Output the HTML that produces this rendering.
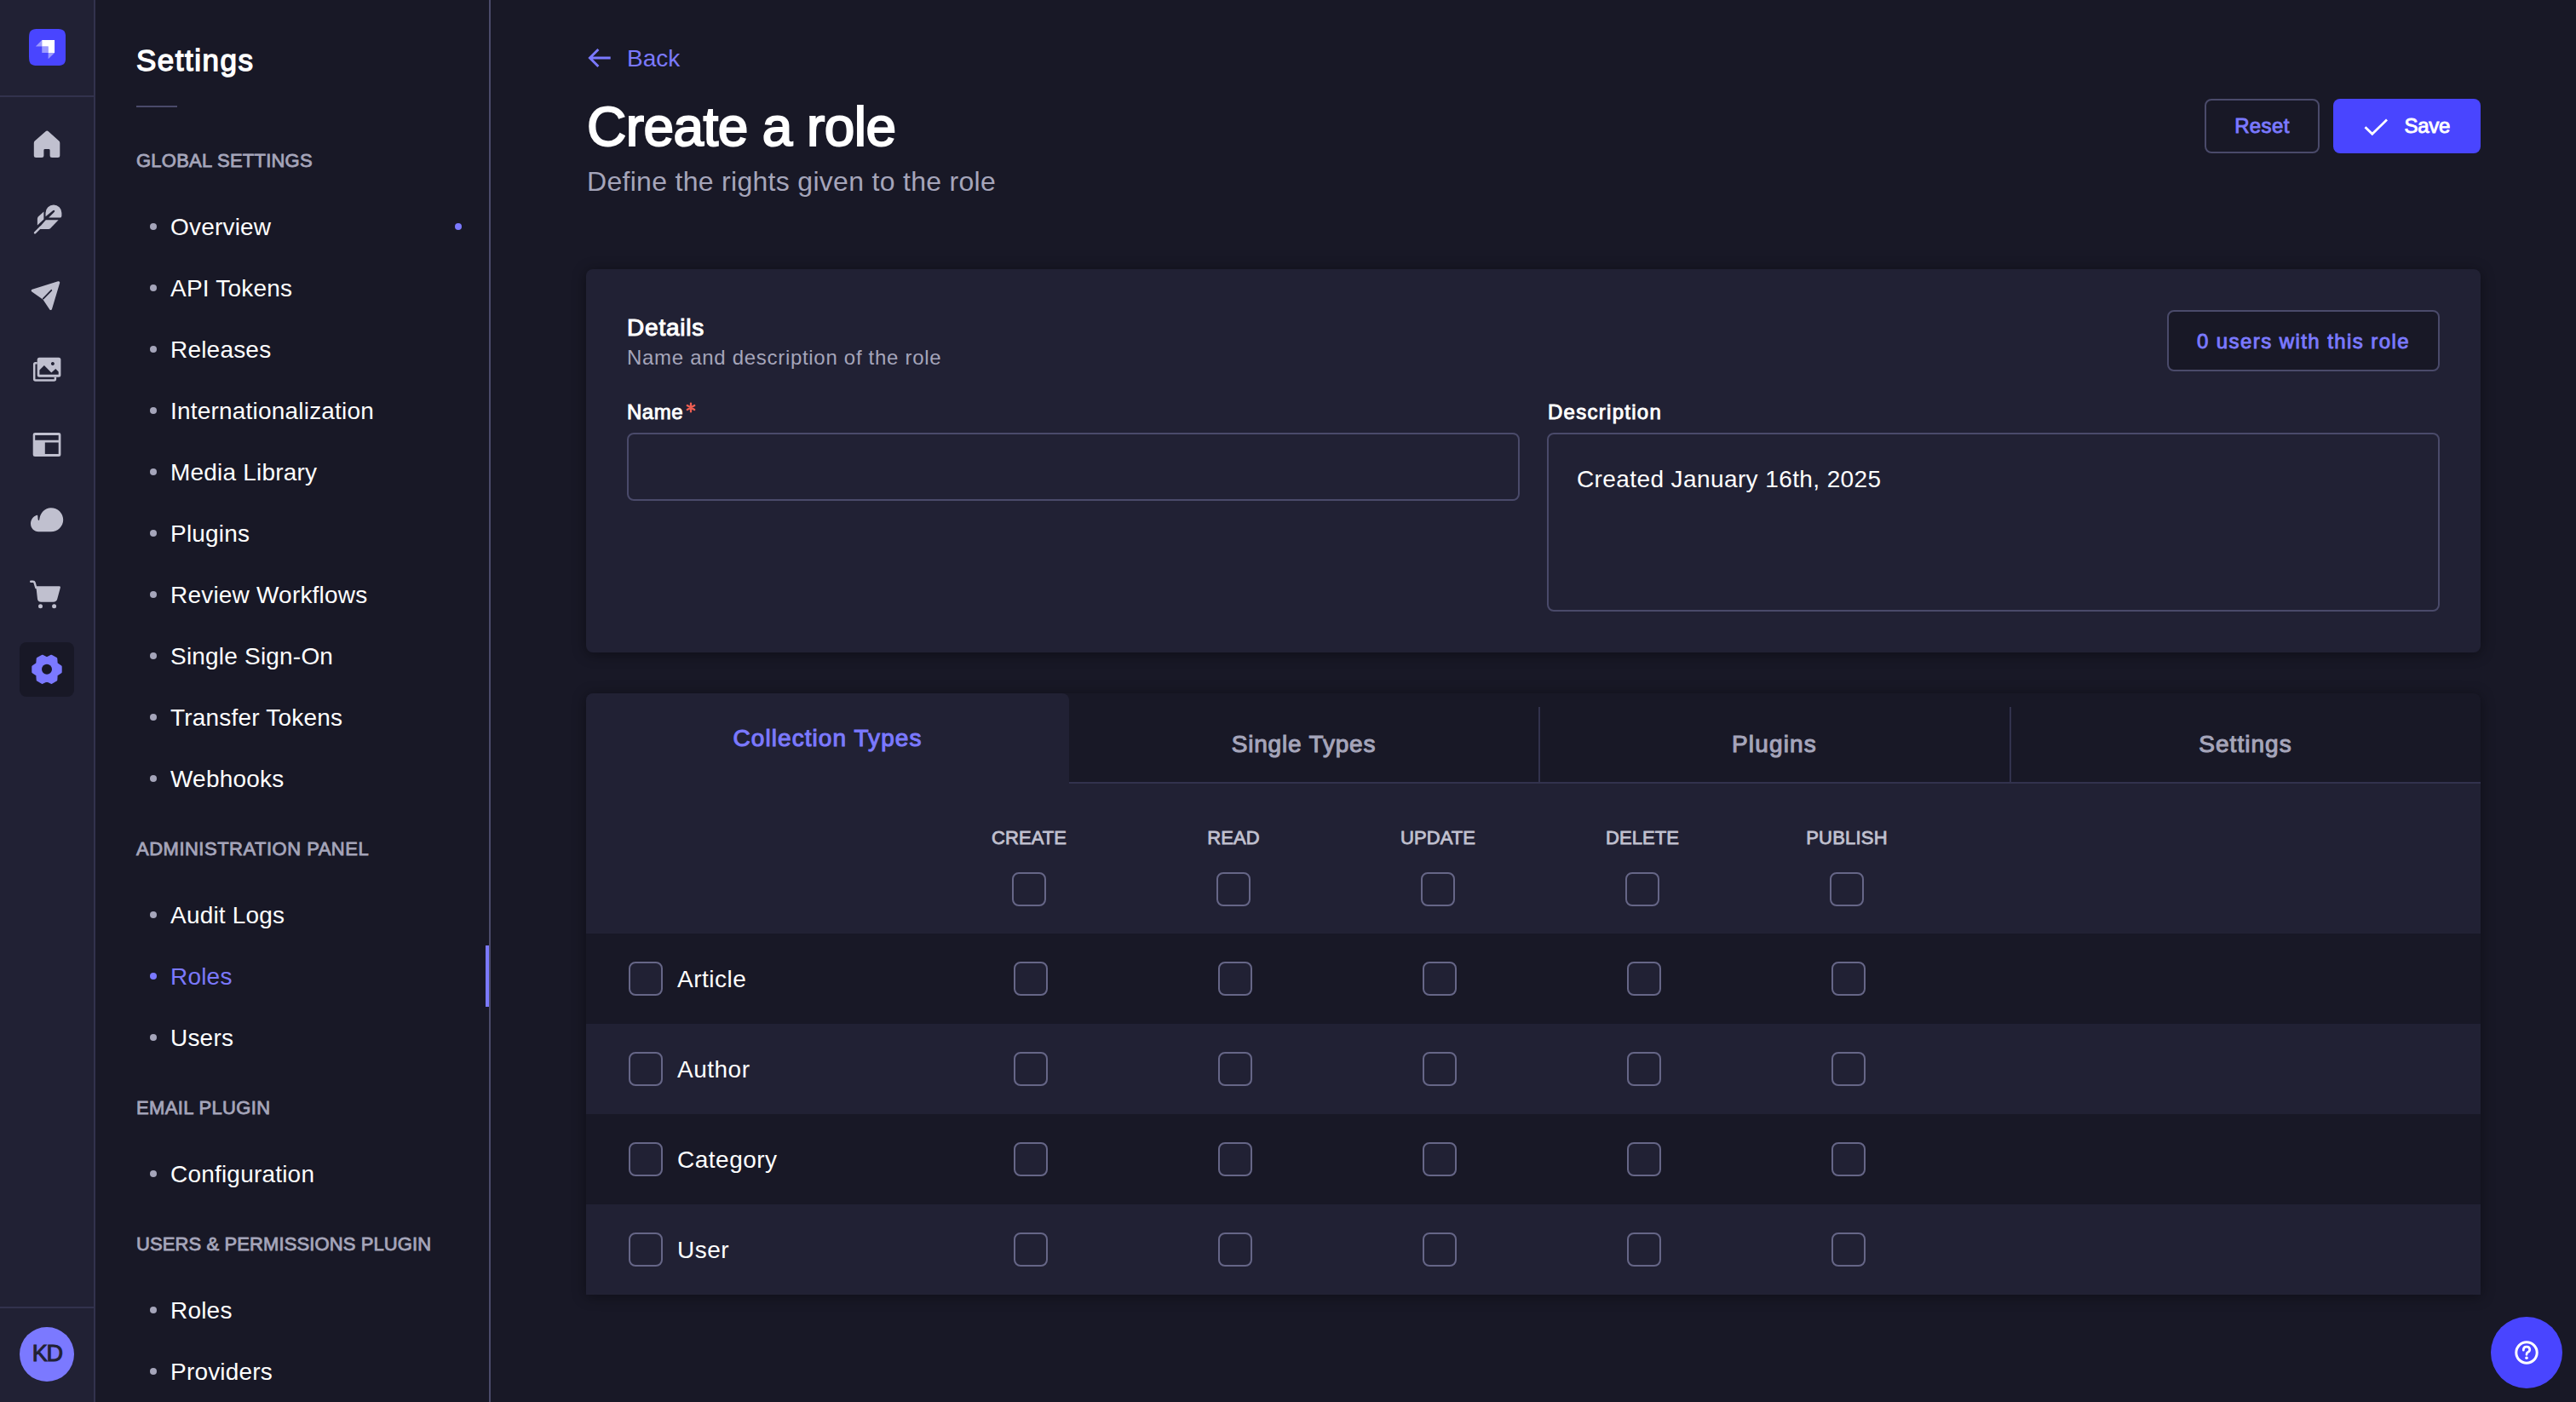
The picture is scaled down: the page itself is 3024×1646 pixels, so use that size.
<!DOCTYPE html><html><head><meta charset="utf-8"><style>
html,body{margin:0;padding:0;}
body{width:3024px;height:1646px;overflow:hidden;background:#181826;position:relative;font-family:"Liberation Sans",sans-serif;}
.t{position:absolute;white-space:nowrap;}
.r{position:absolute;box-sizing:border-box;}
svg{position:absolute;}
</style></head><body>
<div class="r" style="left:0px;top:0px;width:110px;height:1646px;background:#212134;"></div>
<div class="r" style="left:110px;top:0px;width:2px;height:1646px;background:#32324d;"></div>
<div class="r" style="left:0px;top:112px;width:110px;height:2px;background:#32324d;"></div>
<div class="r" style="left:0px;top:1534px;width:110px;height:2px;background:#32324d;"></div>
<div class="r" style="left:23px;top:754px;width:64px;height:64px;background:#181826;border-radius:8px;"></div>
<svg style="left:34.3px;top:33.8px" width="43.2" height="43.2" viewBox="0 0 600 600">
<path fill="#4945FF" d="M0 208C0 109.948 0 60.9218 30.4609 30.4609C60.9218 0 109.948 0 208 0H392C490.052 0 539.078 0 569.539 30.4609C600 60.9218 600 109.948 600 208V392C600 490.052 600 539.078 569.539 569.539C539.078 600 490.052 600 392 600H208C109.948 600 60.9218 600 30.4609 569.539C0 539.078 0 490.052 0 392V208Z"/>
<path fill="#fff" fill-rule="evenodd" d="M414 182H212V285H315V388H418V186C418 183.791 416.209 182 414 182Z"/>
<rect width="4" height="4" x="311" y="384" fill="#fff"/>
<path fill="#fff" d="M212 285H311C313.209 285 315 286.791 315 289V388H216C213.791 388 212 386.209 212 384V285Z" opacity=".45"/>
<path fill="#fff" d="M315 388H418L318.414 487.586C317.154 488.846 315 487.953 315 486.172V388Z" opacity=".45"/>
<path fill="#fff" d="M212 285V182L112.414 281.586C111.154 282.846 112.046 285 113.828 285H212Z" opacity=".45"/>
</svg>
<svg style="left:0;top:0" width="110" height="840" viewBox="0 0 110 840">
<!-- home -->
<path fill="#c0c0cf" d="M53.6 154.2 Q55.2 152.8 56.8 154.2 L69.3 165.5 Q70.3 166.4 70.3 167.9 L70.3 182.5 Q70.3 185 67.8 185 L61.1 185 Q58.6 185 58.6 182.5 L58.6 176.5 Q58.6 175.1 57.2 175.1 L52.8 175.1 Q51.4 175.1 51.4 176.5 L51.4 182.5 Q51.4 185 48.9 185 L42.3 185 Q39.8 185 39.8 182.5 L39.8 167.9 Q39.8 166.4 40.8 165.5 Z"/>
<!-- feather -->
<path fill="#c0c0cf" d="M53.5 254.2 L53.5 250 A9.45 9.45 0 0 1 72.4 250 L72.4 253.5 Q72.4 255.5 70.4 255.5 L57.2 255.5 L63.9 248.8 Q64.7 247.9 63.9 247.1 Q63 246.3 62.1 247.2 Z"/>
<path fill="#c0c0cf" d="M43.9 256.8 Q43.9 255.3 45 254.3 L51.4 248.5 L51.4 257.4 L43.9 264.4 Z"/>
<path fill="#c0c0cf" d="M53.8 258.2 L68.6 258.2 L59 268.2 Q58.2 269 57 269 L47.3 269 L45.9 267.3 Z"/>
<path fill="none" stroke="#c0c0cf" stroke-width="2.4" stroke-linecap="round" d="M41 273.3 L47.5 266.8"/>
<!-- paper plane -->
<path fill="#c0c0cf" stroke="#c0c0cf" stroke-width="3.2" stroke-linejoin="round" d="M38.3 341.2 L68.6 331.8 L59.5 362.4 L51.5 350.4 Z"/>
<path fill="none" stroke="#212134" stroke-width="1.8" stroke-linecap="round" d="M60.3 340.8 L50.8 350.6"/>
<!-- media -->
<path fill="#c0c0cf" fill-rule="evenodd" d="M46.2 419.8 L68.9 419.8 Q71.4 419.8 71.4 422.3 L71.4 440.3 Q71.4 442.8 68.9 442.8 L46.2 442.8 Q43.7 442.8 43.7 440.3 L43.7 422.3 Q43.7 419.8 46.2 419.8 Z M46.4 439.7 L68.7 439.7 L68.7 436.4 L65.3 433 L60.3 437.6 L51.9 429.1 L46.4 434.5 Z M61.9 424.9 A2 2 0 1 0 61.91 424.9 Z"/>
<path fill="none" stroke="#c0c0cf" stroke-width="2.5" d="M43.7 426.3 L41.7 426.3 Q40.2 426.3 40.2 427.8 L40.2 445.1 Q40.2 446.6 41.7 446.6 L63.4 446.6 Q64.9 446.6 64.9 445.1 L64.9 442.8"/>
<!-- layout -->
<path fill="#c0c0cf" fill-rule="evenodd" d="M41.2 507.9 L68.9 507.9 Q71.4 507.9 71.4 510.4 L71.4 533.6 Q71.4 536.1 68.9 536.1 L41.2 536.1 Q38.7 536.1 38.7 533.6 L38.7 510.4 Q38.7 507.9 41.2 507.9 Z M41.2 511.1 L68.7 511.1 L68.7 516.7 L41.2 516.7 Z M52.8 519.4 L68.7 519.4 L68.7 533.1 L52.8 533.1 Z"/>
<!-- cloud -->
<path fill="#c0c0cf" d="M59.8 596.2 C67.8 596.2 74.2 602.4 74.2 610.2 C74.2 618 67.8 624.2 59.8 624.2 L45.2 624.2 C40 624.2 36 620 36 614.8 C36 610.2 39 606.3 43.2 604.8 Q44.2 604.5 44.3 605.7 L44.6 609.8 Q44.8 611.2 45.6 610.9 Q46.1 610.6 46.3 609.5 C47.3 601.8 52.8 596.2 59.8 596.2 Z"/>
<!-- cart -->
<path fill="none" stroke="#c0c0cf" stroke-width="2.4" stroke-linecap="round" stroke-linejoin="round" d="M36.2 682.8 L38.8 682.8 Q40.2 682.8 40.6 684.2 L42.3 690"/>
<path fill="#c0c0cf" d="M42.3 688.2 L69.8 688.2 Q71.3 688.2 70.9 689.8 L67.3 703 Q66.4 706.8 62.5 706.8 L48.2 706.8 Q44.8 706.8 44 703.5 Z"/>
<circle cx="47.5" cy="711.8" r="2.5" fill="#c0c0cf"/><circle cx="63.6" cy="711.8" r="2.5" fill="#c0c0cf"/>
<!-- gear -->
<polygon points="66.34,779.25 71.30,782.63 71.30,788.97 66.34,792.35 65.89,798.33 60.40,801.50 55.00,798.90 49.60,801.50 44.11,798.33 43.66,792.35 38.70,788.97 38.70,782.63 43.66,779.25 44.11,773.27 49.60,770.10 55.00,772.70 60.40,770.10 65.89,773.27" fill="#7b79ff" stroke="#7b79ff" stroke-width="2.8" stroke-linejoin="round"/><circle cx="55" cy="785.8" r="6" fill="#181826"/>
</svg>
<div class="r" style="left:23px;top:1558px;width:64px;height:64px;background:#7b79ff;border-radius:50%;"></div>
<div class="t" style="left:-544.8px;width:1200px;text-align:center;top:1576.44px;font-size:27px;line-height:27px;font-weight:400;color:#212134;letter-spacing:-1.269px;-webkit-text-stroke:1.03px #212134;">KD</div>
<div class="r" style="left:112px;top:0px;width:462px;height:1646px;background:#181826;"></div>
<div class="r" style="left:574px;top:0px;width:2px;height:1646px;background:#4a4a6a;"></div>
<div class="t" style="left:160px;top:52.97px;font-size:35px;line-height:35px;font-weight:400;color:#fff;letter-spacing:1.517px;-webkit-text-stroke:1.4px #fff;">Settings</div>
<div class="r" style="left:160px;top:124px;width:48px;height:2px;background:#4a4a6a;"></div>
<div class="t" style="left:160px;top:178.38px;font-size:22px;line-height:22px;font-weight:400;color:#a5a5ba;letter-spacing:0.234px;-webkit-text-stroke:0.84px #a5a5ba;">GLOBAL SETTINGS</div>
<div class="r" style="left:176px;top:261.5px;width:8px;height:8.0px;background:#a5a5ba;border-radius:50%;"></div>
<div class="t" style="left:200px;top:252.60px;font-size:28px;line-height:28px;font-weight:400;color:#fff;letter-spacing:0.2px;">Overview</div>
<div class="r" style="left:176px;top:333.5px;width:8px;height:8.0px;background:#a5a5ba;border-radius:50%;"></div>
<div class="t" style="left:200px;top:324.60px;font-size:28px;line-height:28px;font-weight:400;color:#fff;letter-spacing:0.2px;">API Tokens</div>
<div class="r" style="left:176px;top:405.5px;width:8px;height:8.0px;background:#a5a5ba;border-radius:50%;"></div>
<div class="t" style="left:200px;top:396.60px;font-size:28px;line-height:28px;font-weight:400;color:#fff;letter-spacing:0.2px;">Releases</div>
<div class="r" style="left:176px;top:477.5px;width:8px;height:8.0px;background:#a5a5ba;border-radius:50%;"></div>
<div class="t" style="left:200px;top:468.60px;font-size:28px;line-height:28px;font-weight:400;color:#fff;letter-spacing:0.2px;">Internationalization</div>
<div class="r" style="left:176px;top:549.5px;width:8px;height:8.0px;background:#a5a5ba;border-radius:50%;"></div>
<div class="t" style="left:200px;top:540.60px;font-size:28px;line-height:28px;font-weight:400;color:#fff;letter-spacing:0.2px;">Media Library</div>
<div class="r" style="left:176px;top:621.5px;width:8px;height:8.0px;background:#a5a5ba;border-radius:50%;"></div>
<div class="t" style="left:200px;top:612.60px;font-size:28px;line-height:28px;font-weight:400;color:#fff;letter-spacing:0.2px;">Plugins</div>
<div class="r" style="left:176px;top:693.5px;width:8px;height:8.0px;background:#a5a5ba;border-radius:50%;"></div>
<div class="t" style="left:200px;top:684.60px;font-size:28px;line-height:28px;font-weight:400;color:#fff;letter-spacing:0.2px;">Review Workflows</div>
<div class="r" style="left:176px;top:765.5px;width:8px;height:8.0px;background:#a5a5ba;border-radius:50%;"></div>
<div class="t" style="left:200px;top:756.60px;font-size:28px;line-height:28px;font-weight:400;color:#fff;letter-spacing:0.2px;">Single Sign-On</div>
<div class="r" style="left:176px;top:837.5px;width:8px;height:8.0px;background:#a5a5ba;border-radius:50%;"></div>
<div class="t" style="left:200px;top:828.60px;font-size:28px;line-height:28px;font-weight:400;color:#fff;letter-spacing:0.2px;">Transfer Tokens</div>
<div class="r" style="left:176px;top:909.5px;width:8px;height:8.0px;background:#a5a5ba;border-radius:50%;"></div>
<div class="t" style="left:200px;top:900.60px;font-size:28px;line-height:28px;font-weight:400;color:#fff;letter-spacing:0.2px;">Webhooks</div>
<div class="r" style="left:534px;top:262px;width:8px;height:8px;background:#7b79ff;border-radius:50%;"></div>
<div class="t" style="left:160px;top:985.98px;font-size:22px;line-height:22px;font-weight:400;color:#a5a5ba;letter-spacing:0.497px;-webkit-text-stroke:0.84px #a5a5ba;">ADMINISTRATION PANEL</div>
<div class="r" style="left:176px;top:1069.5px;width:8px;height:8.0px;background:#a5a5ba;border-radius:50%;"></div>
<div class="t" style="left:200px;top:1060.60px;font-size:28px;line-height:28px;font-weight:400;color:#fff;letter-spacing:0.2px;">Audit Logs</div>
<div class="r" style="left:176px;top:1141.5px;width:8px;height:8.0px;background:#7b79ff;border-radius:50%;"></div>
<div class="t" style="left:200px;top:1132.60px;font-size:28px;line-height:28px;font-weight:400;color:#7b79ff;letter-spacing:0.2px;">Roles</div>
<div class="r" style="left:176px;top:1213.5px;width:8px;height:8.0px;background:#a5a5ba;border-radius:50%;"></div>
<div class="t" style="left:200px;top:1204.60px;font-size:28px;line-height:28px;font-weight:400;color:#fff;letter-spacing:0.2px;">Users</div>
<div class="r" style="left:570px;top:1110px;width:4px;height:72px;background:#7b79ff;"></div>
<div class="t" style="left:160px;top:1289.98px;font-size:22px;line-height:22px;font-weight:400;color:#a5a5ba;letter-spacing:0.353px;-webkit-text-stroke:0.84px #a5a5ba;">EMAIL PLUGIN</div>
<div class="r" style="left:176px;top:1373.5px;width:8px;height:8.0px;background:#a5a5ba;border-radius:50%;"></div>
<div class="t" style="left:200px;top:1364.60px;font-size:28px;line-height:28px;font-weight:400;color:#fff;letter-spacing:0.2px;">Configuration</div>
<div class="t" style="left:160px;top:1449.68px;font-size:22px;line-height:22px;font-weight:400;color:#a5a5ba;letter-spacing:0.101px;-webkit-text-stroke:0.84px #a5a5ba;">USERS &amp; PERMISSIONS PLUGIN</div>
<div class="r" style="left:176px;top:1533.5px;width:8px;height:8.0px;background:#a5a5ba;border-radius:50%;"></div>
<div class="t" style="left:200px;top:1524.60px;font-size:28px;line-height:28px;font-weight:400;color:#fff;letter-spacing:0.2px;">Roles</div>
<div class="r" style="left:176px;top:1605.5px;width:8px;height:8.0px;background:#a5a5ba;border-radius:50%;"></div>
<div class="t" style="left:200px;top:1596.60px;font-size:28px;line-height:28px;font-weight:400;color:#fff;letter-spacing:0.2px;">Providers</div>
<svg style="left:688px;top:54px" width="30" height="28" viewBox="0 0 30 28"><path d="M28.7 14 H4.5 M14.4 4 L4.4 14 L14.4 24" fill="none" stroke="#7b79ff" stroke-width="2.9" stroke-linecap="butt" stroke-linejoin="miter"/></svg>
<div class="t" style="left:736px;top:54.90px;font-size:28px;line-height:28px;font-weight:400;color:#7b79ff;letter-spacing:0px;">Back</div>
<div class="t" style="left:689px;top:117.12px;font-size:64px;line-height:64px;font-weight:400;color:#fff;letter-spacing:-0.575px;-webkit-text-stroke:2.0px #fff;">Create a role</div>
<div class="t" style="left:689px;top:196.51px;font-size:32px;line-height:32px;font-weight:400;color:#a5a5ba;letter-spacing:0.3px;">Define the rights given to the role</div>
<div class="r" style="left:2588px;top:116px;width:135px;height:64px;background:#181826;border:2px solid #4a4a6a;border-radius:8px;"></div>
<div class="t" style="left:2055.5px;width:1200px;text-align:center;top:135.88px;font-size:24px;line-height:24px;font-weight:400;color:#7b79ff;letter-spacing:0.399px;-webkit-text-stroke:0.91px #7b79ff;">Reset</div>
<div class="r" style="left:2739px;top:116px;width:173px;height:64px;background:#4945ff;border-radius:8px;"></div>
<svg style="left:2774px;top:136px" width="30" height="24" viewBox="0 0 30 24"><path d="M2.5 13.2 L10.8 21.2 L28 4.6" fill="none" stroke="#fff" stroke-width="2.8" stroke-linecap="butt" stroke-linejoin="miter"/></svg>
<div class="t" style="left:2822.6px;top:135.88px;font-size:24px;line-height:24px;font-weight:400;color:#fff;letter-spacing:-0.354px;-webkit-text-stroke:0.91px #fff;">Save</div>
<div class="r" style="left:688px;top:316px;width:2224px;height:450px;background:#212134;border-radius:8px;box-shadow:0 2px 16px rgba(3,3,5,0.42);"></div>
<div class="t" style="left:736px;top:371.10px;font-size:28px;line-height:28px;font-weight:400;color:#fff;letter-spacing:0.793px;-webkit-text-stroke:1.06px #fff;">Details</div>
<div class="t" style="left:736px;top:407.68px;font-size:24px;line-height:24px;font-weight:400;color:#a5a5ba;letter-spacing:0.7px;">Name and description of the role</div>
<div class="r" style="left:2544px;top:364px;width:320px;height:72px;background:#181826;border:2px solid #4a4a6a;border-radius:8px;"></div>
<div class="t" style="left:2104px;width:1200px;text-align:center;top:389.08px;font-size:24px;line-height:24px;font-weight:400;color:#7b79ff;letter-spacing:1.424px;-webkit-text-stroke:0.91px #7b79ff;">0 users with this role</div>
<div class="t" style="left:736px;top:472.28px;font-size:24px;line-height:24px;font-weight:400;color:#fff;letter-spacing:0.517px;-webkit-text-stroke:0.91px #fff;">Name</div>
<svg style="left:800px;top:468px" width="22" height="22" viewBox="0 0 22 22"><path d="M11 5.6 V15.4 M6.76 8.05 L15.24 12.95 M6.76 12.95 L15.24 8.05" stroke="#ee5e52" stroke-width="2.3" stroke-linecap="round"/></svg>
<div class="r" style="left:736px;top:508px;width:1048px;height:80px;background:#212134;border:2px solid #4a4a6a;border-radius:8px;"></div>
<div class="t" style="left:1817px;top:472.28px;font-size:24px;line-height:24px;font-weight:400;color:#fff;letter-spacing:1.276px;-webkit-text-stroke:0.91px #fff;">Description</div>
<div class="r" style="left:1816px;top:508px;width:1048px;height:210px;background:#212134;border:2px solid #4a4a6a;border-radius:8px;"></div>
<div class="t" style="left:1851px;top:549.10px;font-size:28px;line-height:28px;font-weight:400;color:#fff;letter-spacing:0.4px;">Created January 16th, 2025</div>
<div class="r" style="left:688px;top:814px;width:2224px;height:706px;background:#181826;border-radius:8px 8px 0 0;box-shadow:0 2px 16px rgba(3,3,5,0.42);"></div>
<div class="r" style="left:688px;top:814px;width:567px;height:105px;background:#212134;border-radius:8px 8px 0 0;"></div>
<div class="r" style="left:1806px;top:830px;width:2px;height:89px;background:#32324d;"></div>
<div class="r" style="left:2359px;top:830px;width:2px;height:89px;background:#32324d;"></div>
<div class="t" style="left:371.5px;width:1200px;text-align:center;top:853.20px;font-size:28px;line-height:28px;font-weight:400;color:#7b79ff;letter-spacing:1.063px;-webkit-text-stroke:1.06px #7b79ff;">Collection Types</div>
<div class="t" style="left:930.5px;width:1200px;text-align:center;top:860.30px;font-size:28px;line-height:28px;font-weight:400;color:#a5a5ba;letter-spacing:0.814px;-webkit-text-stroke:1.06px #a5a5ba;">Single Types</div>
<div class="t" style="left:1483px;width:1200px;text-align:center;top:860.30px;font-size:28px;line-height:28px;font-weight:400;color:#a5a5ba;letter-spacing:1.175px;-webkit-text-stroke:1.06px #a5a5ba;">Plugins</div>
<div class="t" style="left:2036px;width:1200px;text-align:center;top:860.30px;font-size:28px;line-height:28px;font-weight:400;color:#a5a5ba;letter-spacing:1.028px;-webkit-text-stroke:1.06px #a5a5ba;">Settings</div>
<div class="r" style="left:688px;top:919px;width:2224px;height:177px;background:#212134;"></div>
<div class="r" style="left:1255px;top:918px;width:1657px;height:2px;background:#32324d;"></div>
<div class="r" style="left:688px;top:1202px;width:2224px;height:106px;background:#212134;"></div>
<div class="r" style="left:688px;top:1414px;width:2224px;height:106px;background:#212134;"></div>
<div class="t" style="left:608px;width:1200px;text-align:center;top:972.88px;font-size:22px;line-height:22px;font-weight:400;color:#c0c0cf;letter-spacing:0.062px;-webkit-text-stroke:0.84px #c0c0cf;">CREATE</div>
<div class="r" style="left:1188px;top:1024px;width:40px;height:40px;background:#212134;border:2px solid #666687;border-radius:8px;"></div>
<div class="t" style="left:848px;width:1200px;text-align:center;top:972.88px;font-size:22px;line-height:22px;font-weight:400;color:#c0c0cf;letter-spacing:0.093px;-webkit-text-stroke:0.84px #c0c0cf;">READ</div>
<div class="r" style="left:1428px;top:1024px;width:40px;height:40px;background:#212134;border:2px solid #666687;border-radius:8px;"></div>
<div class="t" style="left:1088px;width:1200px;text-align:center;top:972.88px;font-size:22px;line-height:22px;font-weight:400;color:#c0c0cf;letter-spacing:0.062px;-webkit-text-stroke:0.84px #c0c0cf;">UPDATE</div>
<div class="r" style="left:1668px;top:1024px;width:40px;height:40px;background:#212134;border:2px solid #666687;border-radius:8px;"></div>
<div class="t" style="left:1328px;width:1200px;text-align:center;top:972.88px;font-size:22px;line-height:22px;font-weight:400;color:#c0c0cf;letter-spacing:0.061px;-webkit-text-stroke:0.84px #c0c0cf;">DELETE</div>
<div class="r" style="left:1908px;top:1024px;width:40px;height:40px;background:#212134;border:2px solid #666687;border-radius:8px;"></div>
<div class="t" style="left:1568px;width:1200px;text-align:center;top:972.88px;font-size:22px;line-height:22px;font-weight:400;color:#c0c0cf;letter-spacing:0.225px;-webkit-text-stroke:0.84px #c0c0cf;">PUBLISH</div>
<div class="r" style="left:2148px;top:1024px;width:40px;height:40px;background:#212134;border:2px solid #666687;border-radius:8px;"></div>
<div class="r" style="left:738px;top:1129px;width:40px;height:40px;background:#212134;border:2px solid #666687;border-radius:8px;"></div>
<div class="t" style="left:795px;top:1136.00px;font-size:28px;line-height:28px;font-weight:400;color:#fff;letter-spacing:0.5px;">Article</div>
<div class="r" style="left:1190px;top:1129px;width:40px;height:40px;background:#212134;border:2px solid #666687;border-radius:8px;"></div>
<div class="r" style="left:1430px;top:1129px;width:40px;height:40px;background:#212134;border:2px solid #666687;border-radius:8px;"></div>
<div class="r" style="left:1670px;top:1129px;width:40px;height:40px;background:#212134;border:2px solid #666687;border-radius:8px;"></div>
<div class="r" style="left:1910px;top:1129px;width:40px;height:40px;background:#212134;border:2px solid #666687;border-radius:8px;"></div>
<div class="r" style="left:2150px;top:1129px;width:40px;height:40px;background:#212134;border:2px solid #666687;border-radius:8px;"></div>
<div class="r" style="left:738px;top:1235px;width:40px;height:40px;background:#212134;border:2px solid #666687;border-radius:8px;"></div>
<div class="t" style="left:795px;top:1242.00px;font-size:28px;line-height:28px;font-weight:400;color:#fff;letter-spacing:0.5px;">Author</div>
<div class="r" style="left:1190px;top:1235px;width:40px;height:40px;background:#212134;border:2px solid #666687;border-radius:8px;"></div>
<div class="r" style="left:1430px;top:1235px;width:40px;height:40px;background:#212134;border:2px solid #666687;border-radius:8px;"></div>
<div class="r" style="left:1670px;top:1235px;width:40px;height:40px;background:#212134;border:2px solid #666687;border-radius:8px;"></div>
<div class="r" style="left:1910px;top:1235px;width:40px;height:40px;background:#212134;border:2px solid #666687;border-radius:8px;"></div>
<div class="r" style="left:2150px;top:1235px;width:40px;height:40px;background:#212134;border:2px solid #666687;border-radius:8px;"></div>
<div class="r" style="left:738px;top:1341px;width:40px;height:40px;background:#212134;border:2px solid #666687;border-radius:8px;"></div>
<div class="t" style="left:795px;top:1348.00px;font-size:28px;line-height:28px;font-weight:400;color:#fff;letter-spacing:0.5px;">Category</div>
<div class="r" style="left:1190px;top:1341px;width:40px;height:40px;background:#212134;border:2px solid #666687;border-radius:8px;"></div>
<div class="r" style="left:1430px;top:1341px;width:40px;height:40px;background:#212134;border:2px solid #666687;border-radius:8px;"></div>
<div class="r" style="left:1670px;top:1341px;width:40px;height:40px;background:#212134;border:2px solid #666687;border-radius:8px;"></div>
<div class="r" style="left:1910px;top:1341px;width:40px;height:40px;background:#212134;border:2px solid #666687;border-radius:8px;"></div>
<div class="r" style="left:2150px;top:1341px;width:40px;height:40px;background:#212134;border:2px solid #666687;border-radius:8px;"></div>
<div class="r" style="left:738px;top:1447px;width:40px;height:40px;background:#212134;border:2px solid #666687;border-radius:8px;"></div>
<div class="t" style="left:795px;top:1454.00px;font-size:28px;line-height:28px;font-weight:400;color:#fff;letter-spacing:0.5px;">User</div>
<div class="r" style="left:1190px;top:1447px;width:40px;height:40px;background:#212134;border:2px solid #666687;border-radius:8px;"></div>
<div class="r" style="left:1430px;top:1447px;width:40px;height:40px;background:#212134;border:2px solid #666687;border-radius:8px;"></div>
<div class="r" style="left:1670px;top:1447px;width:40px;height:40px;background:#212134;border:2px solid #666687;border-radius:8px;"></div>
<div class="r" style="left:1910px;top:1447px;width:40px;height:40px;background:#212134;border:2px solid #666687;border-radius:8px;"></div>
<div class="r" style="left:2150px;top:1447px;width:40px;height:40px;background:#212134;border:2px solid #666687;border-radius:8px;"></div>
<div class="r" style="left:2924px;top:1546px;width:84px;height:84px;background:#4945ff;border-radius:50%;"></div>
<svg style="left:2946px;top:1568px" width="40" height="40" viewBox="0 0 40 40"><circle cx="20" cy="20" r="12.2" fill="none" stroke="#fff" stroke-width="3"/><path d="M16.3 17.2 Q16.3 13.2 20 13.2 Q23.7 13.2 23.7 16.6 Q23.7 18.6 21.5 19.6 Q20 20.3 20 22.3" fill="none" stroke="#fff" stroke-width="2.8" stroke-linecap="round"/><circle cx="20" cy="26.3" r="1.8" fill="#fff"/></svg>
</body></html>
